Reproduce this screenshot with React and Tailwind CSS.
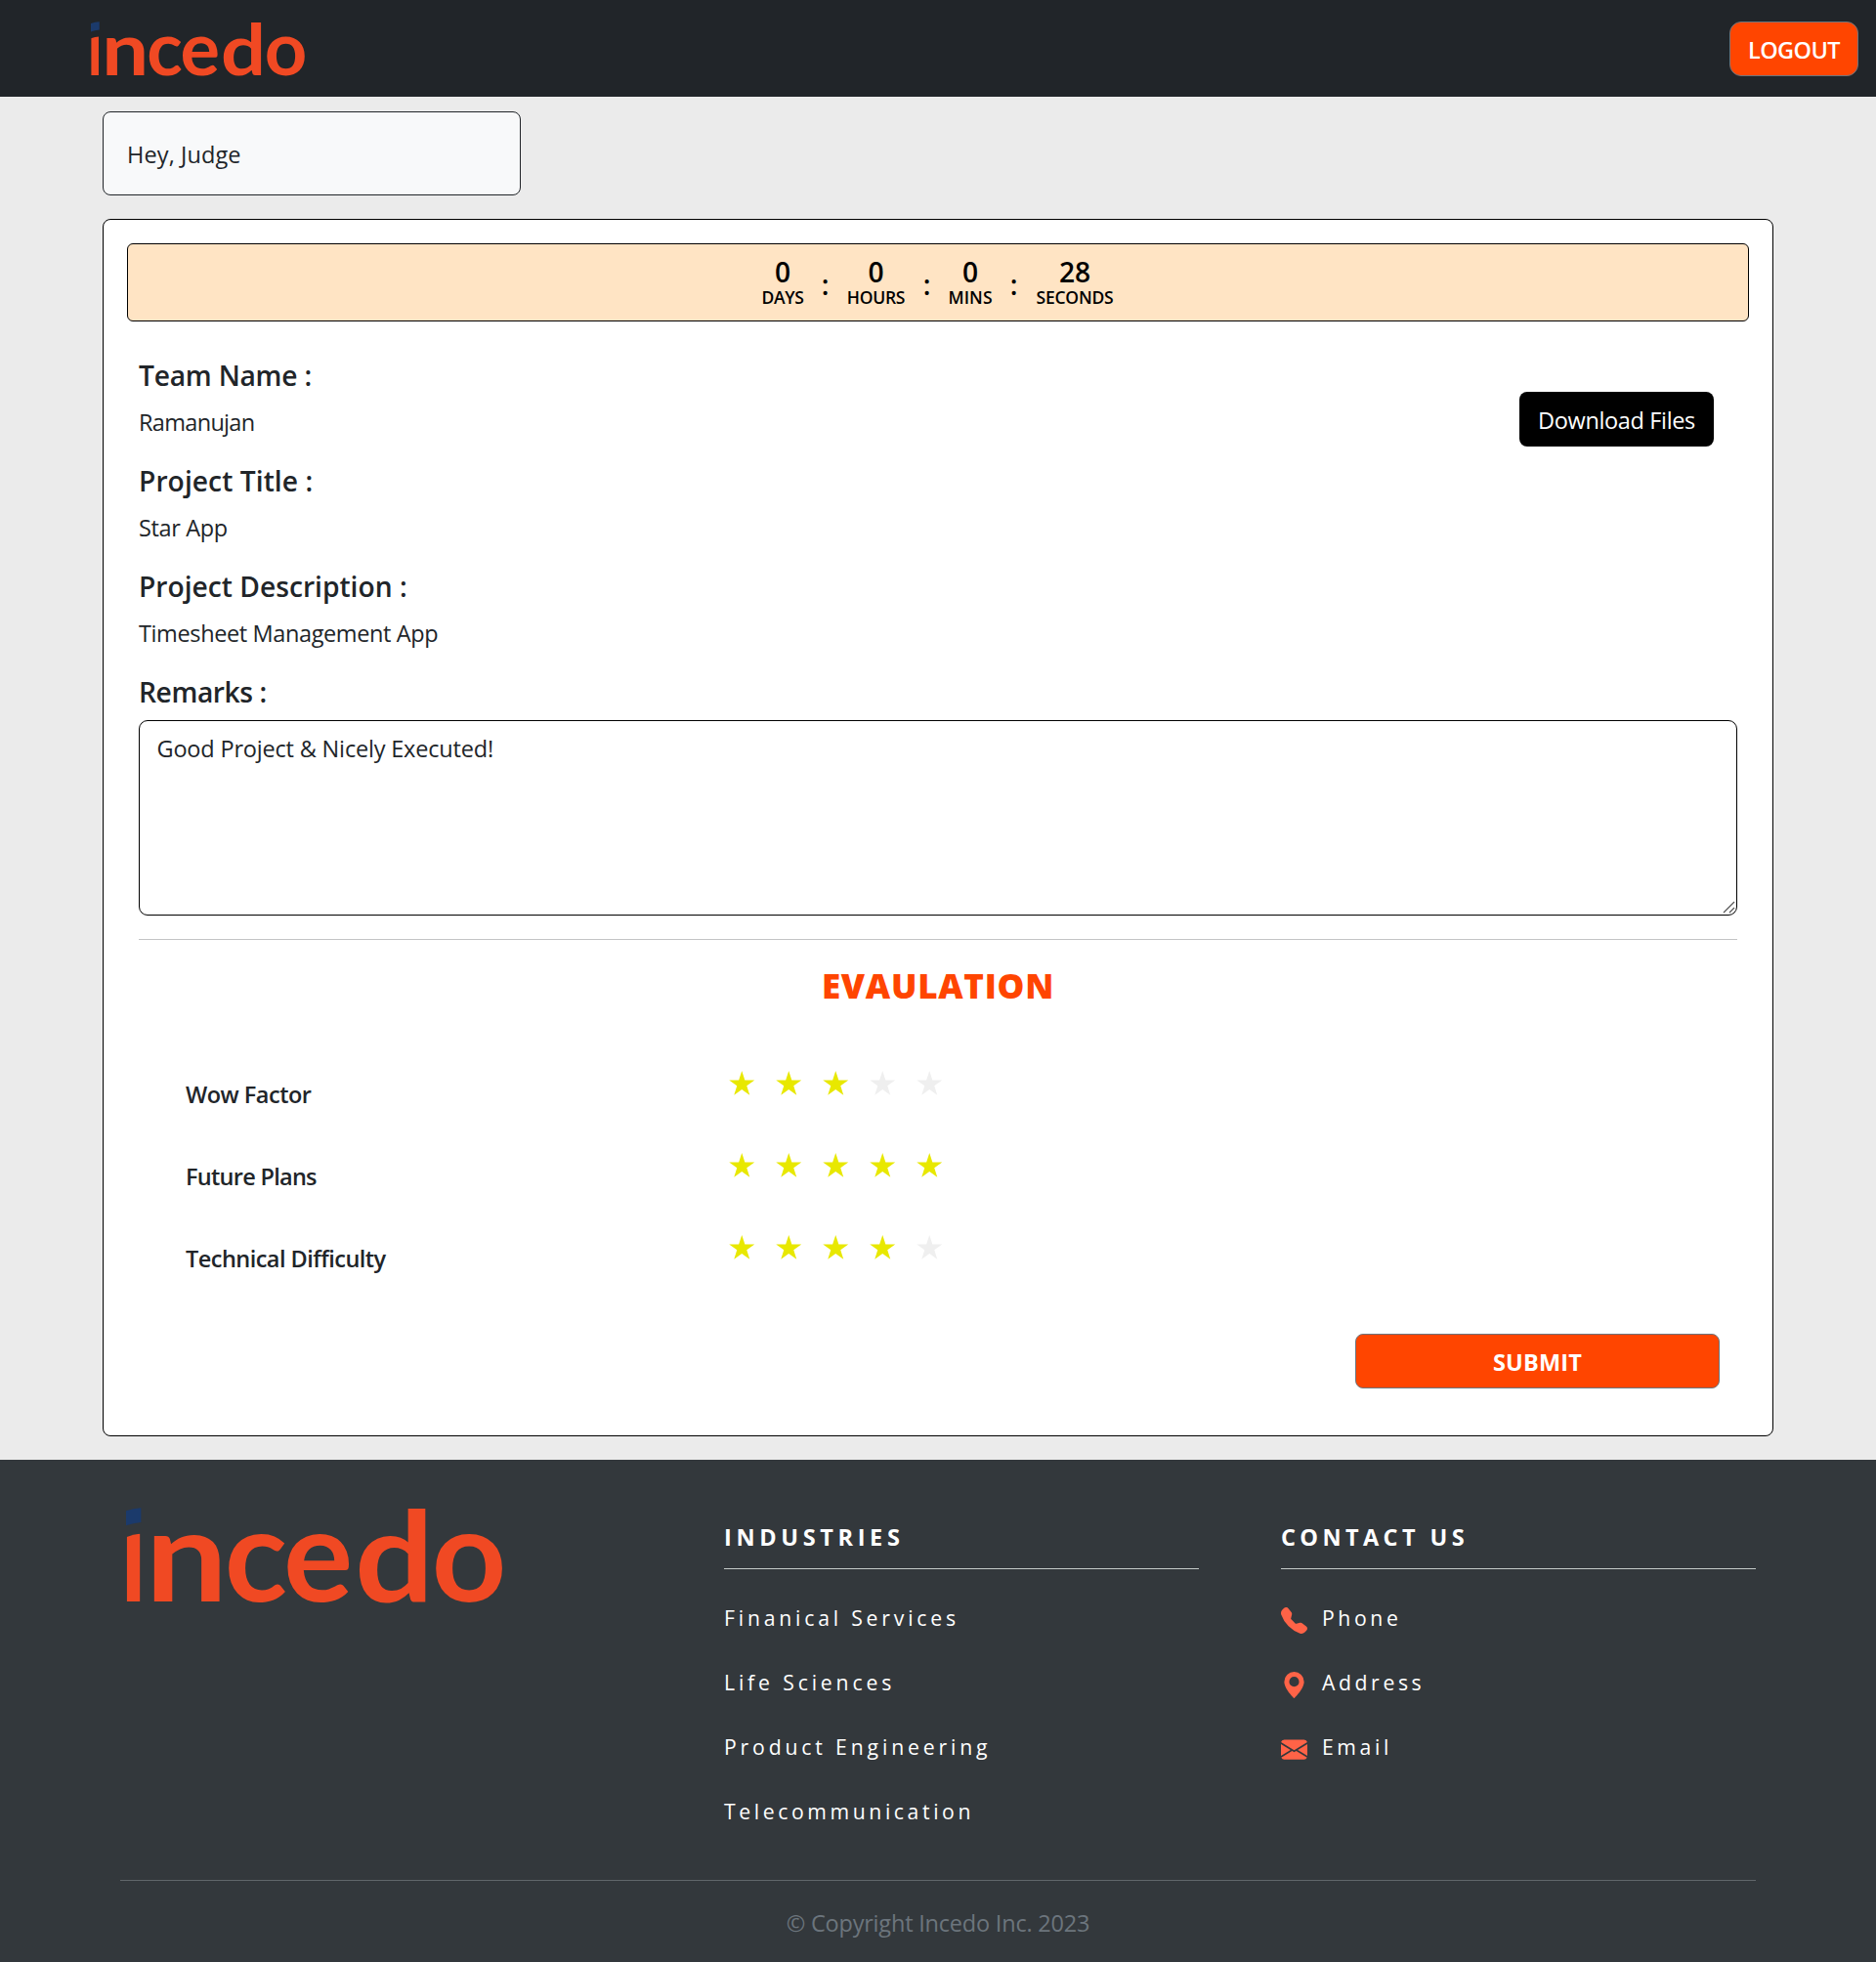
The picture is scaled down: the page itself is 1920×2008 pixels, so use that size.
import React from "react";
import { BsTelephoneFill, BsGeoAltFill, BsEnvelopeFill } from "react-icons/bs";

function Logo({ className, id }) {
  return (
    <svg className={`overflow-visible ${className}`} viewBox="88 189 1155 295" preserveAspectRatio="none" role="img" aria-label="incedo">
      <defs>
        <clipPath id={id}>
          <path d="M88 280 Q110 271 134 269 V479 H88 Z" />
        </clipPath>
      </defs>
      <path d="M88 199 Q110 191 134 190 V234 Q110 236 88 244 Z" fill="#1b3a6b" />
      <g fill="#f04923" fontFamily="Lato, sans-serif" fontWeight="700" fontSize="400">
        <g clipPath={`url(#${id})`}>
          <text transform="translate(70 479) scale(0.8 1.1)">i</text>
        </g>
        <text transform="translate(147 479) scale(1.12 0.98)">n</text>
        <text transform="translate(390 479)">c</text>
        <text transform="translate(571 479)">e</text>
        <text transform="translate(790 479) scale(1.07 0.97)">d</text>
        <text transform="translate(1026 479)">o</text>
      </g>
    </svg>
  );
}

const timer = [
  { value: "0", label: "DAYS", box: "w-[42px]", ls: "tracking-[-0.4px]" },
  { value: "0", label: "HOURS", box: "w-[59px]", ls: "tracking-[-0.25px]" },
  { value: "0", label: "MINS", box: "w-[44px]", ls: "tracking-[0.1px]" },
  { value: "28", label: "SECONDS", box: "w-[80px]", ls: "tracking-[-0.2px]" },
];

const details = [
  { label: "Team Name :", value: "Ramanujan", ll: "tracking-[-0.22px]", vl: "tracking-[-0.68px]" },
  { label: "Project Title :", value: "Star App", ll: "tracking-[0.06px]", vl: "tracking-[-0.37px]" },
  { label: "Project Description :", value: "Timesheet Management App", ll: "tracking-[0px]", vl: "tracking-[-0.38px]" },
];

const ratings = [
  { label: "Wow Factor", stars: 3, ls: "tracking-[-0.5px]" },
  { label: "Future Plans", stars: 5, ls: "tracking-[-0.72px]" },
  { label: "Technical Difficulty", stars: 4, ls: "tracking-[-0.53px]" },
];

const industries = [
  { name: "Finanical Services", ls: "tracking-[3.8px]" },
  { name: "Life Sciences", ls: "tracking-[3.85px]" },
  { name: "Product Engineering", ls: "tracking-[3.85px]" },
  { name: "Telecommunication", ls: "tracking-[3.6px]" },
];

const contacts = [
  { name: "Phone", Icon: BsTelephoneFill, ls: "tracking-[3.6px]" },
  { name: "Address", Icon: BsGeoAltFill, ls: "tracking-[3.6px]" },
  { name: "Email", Icon: BsEnvelopeFill, ls: "tracking-[3.6px]" },
];

function Star({ on }) {
  return (
    <svg viewBox="0 0 26 25" className={`h-[25px] w-[26.5px] ${on ? "text-[#e8e800]" : "text-[#efefef]"}`}>
      <polygon
        fill="currentColor"
        points="13,0 16.1,9.4 26,9.4 18,15.3 21,24.8 13,19 5,24.8 8,15.3 0,9.4 9.9,9.4"
      />
    </svg>
  );
}

export default function App() {
  return (
    <div className="h-[2008px] overflow-hidden bg-[#ebebeb] font-['Open_Sans','Noto_Sans',sans-serif] text-[23.5px] leading-9 text-[#212529]">
      <header className="flex h-[99px] items-start justify-between bg-[#212529] pt-[22px] pr-[18px] pl-[93px]">
        <Logo id="navStem" className="h-[56px] w-[219px]" />
        <button className="flex h-14 w-[132px] items-center justify-center rounded-xl border border-[#6c757d] bg-[#ff4500] pt-[2px] font-semibold tracking-[-0.62px] text-white">
          LOGOUT
        </button>
      </header>

      <main className="px-[105px] pt-[15px]">
        <section className="flex h-[86px] w-[428px] items-center rounded-lg border border-[#212529] bg-[#f8f9fa] pt-[2px] pl-6">
          <p className="tracking-[0.11px]">Hey, Judge</p>
        </section>

        <section className="mt-6 rounded-lg border border-black bg-white px-6 pt-6 pb-12">
          <div className="flex h-20 justify-center rounded-md border border-black bg-[#ffe4c4] pt-[13px] text-black">
            {timer.map((t, i) => (
              <React.Fragment key={t.label}>
                {i > 0 && (
                  <span className="w-[45px] pt-[13px] text-center text-[28.2px] leading-[30px] font-semibold">:</span>
                )}
                <div className={`flex flex-col items-center ${t.box}`}>
                  <span className="text-[28.2px] leading-[30px] font-semibold">{t.value}</span>
                  <span className={`mt-px text-[17.5px] leading-5 font-semibold ${t.ls}`}>{t.label}</span>
                </div>
              </React.Fragment>
            ))}
          </div>

          <div className="px-3 pt-[37px]">
            <div className="flex items-start justify-between">
              <dl>
                {details.map((d) => (
                  <div key={d.label} className="h-[108px]">
                    <dt className={`text-[28.2px] leading-9 font-semibold ${d.ll}`}>{d.label}</dt>
                    <dd className={`mt-3 ${d.vl}`}>{d.value}</dd>
                  </div>
                ))}
              </dl>
              <button className="mt-[35px] mr-6 flex h-14 w-[199px] items-center justify-center rounded-lg bg-black pt-[2px] tracking-[-0.35px] text-white">
                Download Files
              </button>
            </div>

            <label className="block text-[28.2px] leading-9 font-semibold tracking-[-0.42px]" htmlFor="remarks">
              Remarks :
            </label>
            <div className="relative mt-[11px]">
              <textarea
                id="remarks"
                className="block h-[200px] w-full resize-none rounded-[9px] border border-black bg-white pt-[10px] pr-4 pl-[17.5px] leading-9 tracking-[-0.18px]"
                defaultValue="Good Project & Nicely Executed!"
              />
              <svg className="absolute right-[2px] bottom-[2px] size-[13px]" viewBox="0 0 13 13" stroke="#555" strokeWidth="1.2" fill="none">
                <path d="M1 12 L12 1 M7 12 L12 7" />
              </svg>
            </div>
            <hr className="mt-6 border-[#c4c5c6]" />

            <h2 className="mt-[26px] text-center text-[35px] leading-[42px] font-extrabold tracking-[0.7px] text-[#ff4500]">
              EVAULATION
            </h2>

            <div className="mt-[50px]">
              {ratings.map((r) => (
                <div key={r.label} className="flex h-[84px] items-start pl-12">
                  <span className={`w-[556px] pt-[22px] font-semibold ${r.ls}`}>{r.label}</span>
                  <span className="flex gap-[21.5px] pt-4">
                    {[1, 2, 3, 4, 5].map((n) => (
                      <Star key={n} on={n <= r.stars} />
                    ))}
                  </span>
                </div>
              ))}
            </div>

            <div className="mt-[33px] flex justify-end pr-[18px]">
              <button className="flex h-14 w-[373px] items-center justify-center rounded-lg border border-[#6c757d] bg-[#ff4500] pt-[2px] font-bold tracking-[0.2px] text-white">
                SUBMIT
              </button>
            </div>
          </div>
        </section>
      </main>

      <footer className="mt-6 h-[514px] bg-[#33383c] px-[123px] pt-[49px] text-white">
        <div className="grid grid-cols-[534px_486px_486px] gap-x-[84px]">
          <Logo id="footStem" className="ml-[6px] h-[98px] w-[385px]" />
          <div className="pt-3">
            <h3 className="font-bold tracking-[4.65px]">INDUSTRIES</h3>
            <hr className="mt-[14px] border-[#c4cac9]" />
            <ul className="mt-[34px] flex flex-col gap-[34px] text-[21.2px] leading-8">
              {industries.map((it) => (
                <li key={it.name} className={it.ls}>{it.name}</li>
              ))}
            </ul>
          </div>
          <div className="pt-3">
            <h3 className="font-bold tracking-[4.4px]">CONTACT US</h3>
            <hr className="mt-[14px] border-[#c4cac9]" />
            <ul className="mt-[34px] flex flex-col gap-[34px] text-[21.2px] leading-8">
              {contacts.map(({ name, Icon, ls }) => (
                <li key={name} className={`flex items-start gap-[15px] ${ls}`}>
                  <Icon className="mt-[5px] size-[27px] text-[#ff6347]" />
                  {name}
                </li>
              ))}
            </ul>
          </div>
        </div>
        <hr className="mt-[54px] border-[#60666a]" />
        <p className="mt-[25px] text-center tracking-[-0.2px] text-[#6c757d]">© Copyright Incedo Inc. 2023</p>
      </footer>
    </div>
  );
}
